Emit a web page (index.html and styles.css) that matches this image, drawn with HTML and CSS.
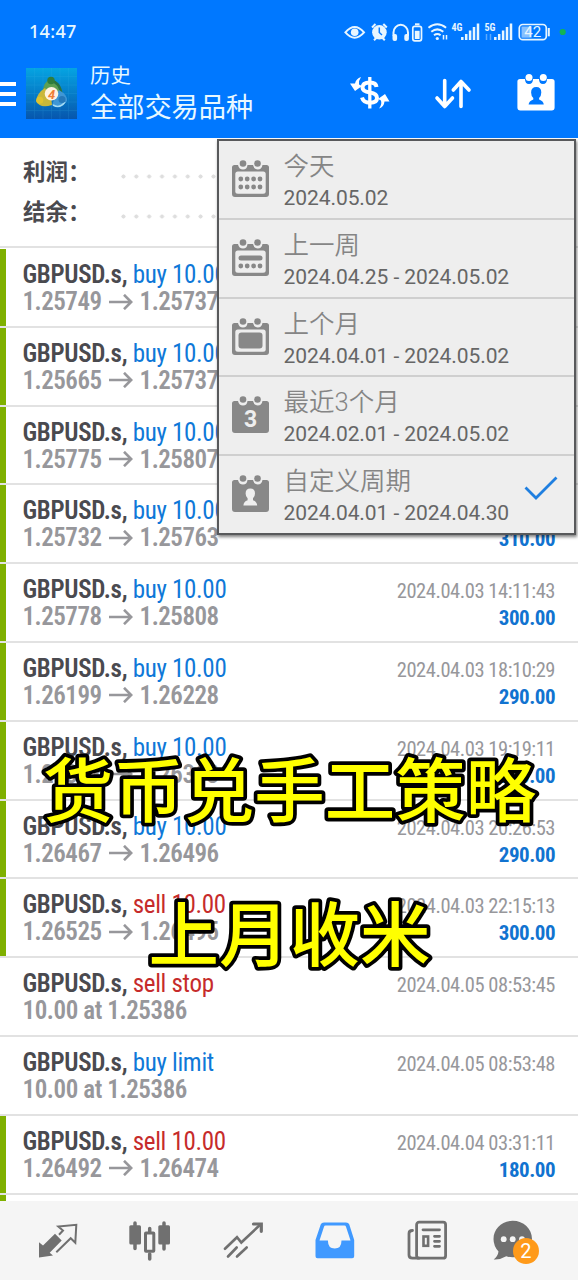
FILE: index.html
```html
<!DOCTYPE html>
<html lang="zh-CN">
<head>
  <meta charset="UTF-8">
  <meta name="viewport" content="width=device-width, initial-scale=1.0">
  <title>历史</title>
  <link rel="stylesheet" href="styles.css">
</head>
<body>
  <header class="header">
    <div class="status-bar">
      <span class="clock">14:47</span>
      <svg class="status-icons" viewBox="0 0 226 28" width="226" height="28" fill="none" stroke="#e8f6ff" stroke-width="2">
        <path d="M3.4 14.3Q12.7 3.5 22 14.3Q12.7 25 3.4 14.3z"/>
        <circle cx="12.7" cy="14.3" r="3.8" fill="#e8f6ff" stroke="none"/>
        <circle cx="37.4" cy="14.3" r="7.3" fill="#e8f6ff" stroke="none"/>
        <path d="M30 9.5l3.5-3.5M44.8 9.5l-3.5-3.5M32 22.2l2.5-2.5M42.8 22.2l-2.5-2.5"/>
        <path d="M37.3 9.5v5l2.7 2.5" stroke="#0a7bff" stroke-width="1.5"/>
        <path d="M51.5 18v-3.5a7.2 7.6 0 0 1 14.5 0V18"/>
        <rect x="50.5" y="16" width="4.6" height="7" rx="2" fill="#e8f6ff" stroke="none"/>
        <rect x="62.3" y="16" width="4.6" height="7" rx="2" fill="#e8f6ff" stroke="none"/>
        <rect x="70.8" y="8.3" width="8.7" height="14.5" rx="2" stroke-width="1.7"/>
        <path d="M73 6.3h4.5"/>
        <rect x="72.8" y="12.8" width="4.8" height="8.2" fill="#e8f6ff" stroke="none"/>
        <path d="M86.5 9.7q8.8-7 17.6 0M89.3 13.7q6-4.7 12 0M92 17.3q3.3-2.5 6.6 0"/>
        <circle cx="95.3" cy="20.5" r="1.6" fill="#e8f6ff" stroke="none"/>
        <path d="M101.5 17v4.5M104.5 17v4.5" stroke-width="1.5"/>
        <path d="M120.3 19v3M124.2 16v6M128.1 12.5v9.5M132 9v13M136 5.5v16.5" stroke-width="2.5"/>
        <path d="M153.3 19v3M157.2 16v6M161.1 12.5v9.5M165 9v13M169 5.5v16.5" stroke-width="2.5"/>
        <path d="M144.5 16v6M148.5 16v6" stroke-width="1.5" opacity=".4"/>
        <rect x="177.3" y="6.5" width="27" height="15.2" rx="3.5" stroke-width="1.7"/>
        <rect x="179.5" y="8.5" width="10" height="11.2" fill="#86c0ff" stroke="none"/>
        <path d="M206.8 10v8.3"/>
        <circle cx="220.7" cy="14" r="3.1" fill="#12b455" stroke="none"/>
        <g fill="#e8f6ff" stroke="none">
          <text class="net" x="109.5" y="13">4G</text>
          <text class="net" x="142.5" y="13">5G</text>
          <text class="level" x="190.8" y="19.3" text-anchor="middle">42</text>
        </g>
      </svg>
    </div>
    <div class="toolbar">
      <div class="burger"><i></i><i></i><i></i></div>
      <svg class="app-icon" viewBox="0 0 51 51" width="51" height="51">
        <defs>
          <linearGradient id="sea" x1="0" y1="0" x2="0" y2="1">
            <stop offset="0" stop-color="#05a4e2"/>
            <stop offset="1" stop-color="#0756ad"/>
          </linearGradient>
        </defs>
        <rect width="51" height="51" fill="url(#sea)"/>
        <path d="M8.5 0v51M17 0v51M25.5 0v51M34 0v51M42.5 0v51M0 8.5h51M0 17h51M0 25.5h51M0 34h51M0 42.5h51" stroke="#3fb4ea" stroke-width=".6" opacity=".25"/>
        <path d="M17 26Q16 14 25 11Q35 14 37 28l-6 2-9-1z" fill="#5d9f52"/>
        <path d="M25 13q9 1 10.5 14" stroke="#2a7340" stroke-width="2.5" fill="none"/>
        <path d="M19 20q-8 5-9 13q4 8 16 4l-1-8z" fill="#c9b73a"/>
        <path d="M33 22q9 5 8 11q-6 8-15 4l3-8z" fill="#3f97d6"/>
        <path d="M27 37q7 4 12-3" stroke="#a5dcf5" stroke-width="1.5" fill="none"/>
        <circle cx="25" cy="12.5" r="3.7" fill="#2f7d3c"/>
        <circle cx="13.8" cy="32.3" r="3.5" fill="#dfc22f"/>
        <circle cx="36" cy="31.5" r="3.5" fill="#2678b9"/>
        <circle cx="25.5" cy="25.8" r="6.8" fill="#fff2df"/>
        <text class="app-num" x="25.5" y="30.5" text-anchor="middle">4</text>
      </svg>
      <div class="titles">
        <div class="title-small">历史</div>
        <div class="title-main">全部交易品种</div>
      </div>
      <div class="actions">
        <svg viewBox="0 0 44 44" width="44" height="44" fill="none" stroke="#fff">
          <path d="M28.5 17Q28 12.5 22 12.5Q14.5 12.5 14.5 17.5Q14.5 21.5 22 22.5Q29 23.5 29 28Q29 32.8 22 32.8Q15.5 32.8 14 27.5" stroke-width="4"/>
          <path d="M21.8 7v31.5" stroke-width="3.3"/>
          <path d="M13 7Q8 8.500 7 13.5L2 13.5l5 7.500L14 16l-3-1.500Q10.500 10.5 13 7zM31 38.500q5-1.500 5.500-7l5 0-4.500-7.500-7 5 3 1.500Q34 34.5 31 38.500z" fill="#fff" stroke="none"/>
        </svg>
        <svg viewBox="0 0 44 44" width="44" height="44" fill="none" stroke="#fff" stroke-width="3.6" stroke-linecap="round" stroke-linejoin="round">
          <path d="M13.7 10.5v26M6 28l7.7 8.5L21.5 28M30 36.5V11.5M22.3 20L30 11.5 38 20"/>
        </svg>
        <svg viewBox="0 0 44 44" width="44" height="44">
          <path d="M6 9h5q0 5 4 5t4-5h6q0 5 4 5t4-5h5q2.600 0 2.600 2.500v26q0 3-3 3H6.400q-3 0-3-3v-26Q3.400 9 6 9z" fill="#fff"/>
          <circle cx="15" cy="7.5" r="3.5" fill="#fff"/>
          <circle cx="29.3" cy="7.5" r="3.5" fill="#fff"/>
          <path d="M22.3 17q5 0 5 5.500 0 3.500-2.200 5.500v1.500q4.400 1.500 4.700 5H14.600q.3-3.500 4.700-5V28q-2.200-2-2.200-5.500 0-5.500 5.200-5.500z" fill="#0078ff"/>
        </svg>
      </div>
    </div>
  </header>

  <section class="summary">
    <div class="summary-row"><b>利润：</b><span class="dots"></span></div>
    <div class="summary-row"><b>结余：</b><span class="dots"></span></div>
  </section>

  <main class="deals" id="deals"></main>

  <nav class="tabs">
    <svg viewBox="0 0 44 44" width="44" height="44" fill="none" stroke="#707070" stroke-width="2">
      <path d="M3 38.5V23.2l4 3.3L19 14.8l6.7 6.7-12 12.3 3.3 2.7z" fill="#707070" stroke="none"/>
      <path d="M20.3 33.2L34.7 19.2l4.6 4.6 1-18-18 1.700 4.700 4-4 4.300"/>
    </svg>
    <svg viewBox="0 0 44 44" width="44" height="44" fill="none" stroke="#707070" stroke-width="3.5" stroke-linecap="round">
      <path d="M7 4v25.5M36 4v26M21.7 9.5V13M21.7 35v5"/>
      <rect x="1.3" y="6.2" width="11.7" height="19.3" rx="1.5" fill="#707070" stroke="none"/>
      <rect x="30.3" y="6.2" width="11.7" height="19.3" rx="1.5" fill="#707070" stroke="none"/>
      <rect x="17.5" y="14" width="8.3" height="18.3" rx=".5" stroke-width="3" fill="#f5f5f5"/>
    </svg>
    <svg viewBox="0 0 44 44" width="44" height="44" fill="none" stroke="#707070" stroke-width="2.6" stroke-linecap="round">
      <path d="M4 29.8L16 18.2l4.3 5.3L39.7 5.3"/>
      <path d="M32.5 5H40.3v7.3" stroke-width="3.2"/>
      <path d="M7 37.5l8.7-9M16 37.5l9.7-9"/>
    </svg>
    <svg viewBox="0 0 44 44" width="44" height="44">
      <path fill="#4099ff" fill-rule="evenodd" d="M11 3.5H33q2.500 0 3.300 2l4.900 15.5v16.2q0 2-2 2H4.500q-2 0-2-2V21L7.700 5.500q.8-2 3.300-2zM12.500 6.500Q11.300 6.500 11 7.800L6.500 21.5h8.400q0 8 6.800 8t6.800-8h9L33 7.800q-.4-1.300-1.500-1.300z"/>
    </svg>
    <svg viewBox="0 0 44 44" width="44" height="44" fill="none" stroke="#707070" stroke-width="2.8" stroke-linecap="round">
      <rect x="11.6" y="3.2" width="29" height="36" rx="2.5"/>
      <path d="M7.5 11.5Q4 11.5 4 14.5V36q0 3.2 3.5 3.2H14M18 10.8h16.5M29.5 17.3h5M29.5 22.3h5M29.5 27.3h5"/>
      <rect x="18.5" y="17.5" width="4.6" height="9.3" stroke-width="2.6"/>
    </svg>
    <div class="chat">
      <svg viewBox="0 0 44 44" width="44" height="44">
        <path fill="#707070" d="M14.7 1.8c10.800 0 19.300 8 19.300 18.200s-8.500 18.300-19.300 18.300q-4 0-6.500-1Q2 41-4.300 40.500 0 37 .5 32.500Q-4.500 27-4.500 20C-4.500 9.800 4 1.800 14.700 1.800z"/>
        <circle cx="5.7" cy="20.2" r="2.9" fill="#f5f5f5"/>
        <circle cx="14.7" cy="20.2" r="2.9" fill="#f5f5f5"/>
        <circle cx="24" cy="20.2" r="2.9" fill="#f5f5f5"/>
      </svg>
      <span class="badge">2</span>
    </div>
  </nav>

  <div class="period-menu" id="periodMenu"></div>

  <svg class="caption" viewBox="0 0 578 280" width="578" height="280">
    <text x="289.5" y="97" text-anchor="middle">货币兑手工策略</text>
    <text x="289.5" y="240.5" text-anchor="middle">上月收米</text>
  </svg>

  <script>
    const deals = [
      { side: 'buy', volume: '10.00', from: '1.25749', to: '1.25737' },
      { side: 'buy', volume: '10.00', from: '1.25665', to: '1.25737' },
      { side: 'buy', volume: '10.00', from: '1.25775', to: '1.25807' },
      { side: 'buy', volume: '10.00', from: '1.25732', to: '1.25763', profit: '310.00' },
      { side: 'buy', volume: '10.00', from: '1.25778', to: '1.25808', time: '2024.04.03 14:11:43', profit: '300.00' },
      { side: 'buy', volume: '10.00', from: '1.26199', to: '1.26228', time: '2024.04.03 18:10:29', profit: '290.00' },
      { side: 'buy', volume: '10.00', from: '1.26333', to: '1.26363', time: '2024.04.03 19:19:11', profit: '300.00' },
      { side: 'buy', volume: '10.00', from: '1.26467', to: '1.26496', time: '2024.04.03 20:26:53', profit: '290.00' },
      { side: 'sell', volume: '10.00', from: '1.26525', to: '1.26495', time: '2024.04.03 22:15:13', profit: '300.00' },
      { side: 'sell', volume: 'stop', order: '10.00 at 1.25386', time: '2024.04.05 08:53:45' },
      { side: 'buy', volume: 'limit', order: '10.00 at 1.25386', time: '2024.04.05 08:53:48' },
      { side: 'sell', volume: '10.00', from: '1.26492', to: '1.26474', time: '2024.04.04 03:31:11', profit: '180.00' }
    ];

    const arrow = '<svg class="arrow" viewBox="0 0 24 16" width="24" height="16" fill="none" stroke="#97979b" stroke-width="2.6"><path d="M0 8h22.5M15 .8l7.2 7.2-7.2 7.2"/></svg>';

    document.getElementById('deals').innerHTML = deals.map(d => `
      <div class="deal ${d.order ? '' : 'closed'}">
        <div class="deal-info">
          <div class="deal-name"><b>GBPUSD.s,</b> <span class="${d.side}">${d.side} ${d.volume}</span></div>
          <div class="deal-price">${d.order ? `<span class="order">${d.order}</span>` : `<span>${d.from}</span>${arrow}<span>${d.to}</span>`}</div>
        </div>
        <div class="deal-result">
          <div class="deal-time">${d.time || ''}</div>
          <div class="deal-profit">${d.profit || ''}</div>
        </div>
      </div>`).join('') + '<div class="deal closed"></div>';

    // calendar drawings share a body, the inside differs per period
    const frame = '<rect x="3.3" y="11.5" width="30.4" height="22.3" rx="2.5" fill="#eee"/>';
    const dot = (x, y) => `<circle cx="${x}" cy="${y}" r="2.4"/>`;
    const dotRow = y => [8.8, 15.2, 21.6, 28].map(x => dot(x, y)).join('');
    const periods = [
      { name: '今天', range: '2024.05.02', icon: frame + dotRow(19) + dotRow(27) },
      { name: '上一周', range: '2024.04.25 - 2024.05.02', icon: frame + '<rect x="6.5" y="16.5" width="24" height="5" rx="2.5"/>' + dotRow(27) },
      { name: '上个月', range: '2024.04.01 - 2024.05.02', icon: frame + '<rect x="6.5" y="14.5" width="24" height="16" rx="3"/>' },
      { name: '最近3个月', range: '2024.02.01 - 2024.05.02', icon: '<text class="cal-num" x="18.5" y="30.5" text-anchor="middle">3</text>' },
      { name: '自定义周期', range: '2024.04.01 - 2024.04.30', checked: true, icon: '<path fill="#eee" d="M18.3 13.5q4.7 0 4.7 5 0 3-2 4.8v2q4 1.4 4.2 5.2H11.400q.2-3.800 4.200-5.200v-2q-2-1.800-2-4.800 0-5 4.700-5z"/>' }
    ];

    document.getElementById('periodMenu').innerHTML = periods.map(p => `
      <div class="period">
        <svg class="cal" viewBox="0 0 37 37" width="37" height="37" fill="#888">
          <path d="M2.5 5H6q1 4.5 5 4.5T15.5 5h5.500q1 4.500 4.800 4.500T30.500 5h4Q37 5 37 7.500V34q0 3-3 3H3q-3 0-3-3V7.500Q0 5 2.500 5z"/>
          <circle cx="11" cy="3.5" r="3.3"/><circle cx="25.5" cy="3.5" r="3.3"/>
          ${p.icon}
        </svg>
        <div class="period-text">
          <div class="period-name">${p.name}</div>
          <div class="period-range">${p.range}</div>
        </div>
        ${p.checked ? '<svg class="check" viewBox="0 0 34 24" width="34" height="24" fill="none" stroke="#1f7fe0" stroke-width="2.8"><path d="M1.5 11.5l10.5 10.5L32.5 1.5"/></svg>' : ''}
      </div>`).join('');
  </script>
</body>
</html>
```
FILE: styles.css
```css
* {
  box-sizing: border-box;
}
body {
  margin: 0;
  height: 1280px;
  position: relative;
  overflow: hidden;
  display: flex;
  flex-direction: column;
  background-color: #fff;
  font-family: Roboto, "Noto Sans CJK SC", sans-serif;
}
svg {
  display: block;
  flex: none;
}
.header {
  height: 138px;
  flex: none;
  background-color: #0078ff;
  color: #e8f8ff;
}
.status-bar {
  display: flex;
  align-items: center;
  justify-content: space-between;
  height: 64px;
  padding: 0 10px 0 29px;
}
.clock {
  padding-bottom: 2px;
  font-family: "Noto Sans", sans-serif;
  font-size: 18px;
  font-weight: 500;
  letter-spacing: 0.3px;
}
.net {
  font: bold 10px Roboto, sans-serif;
  font-stretch: condensed;
}
.level {
  font: 400 15px Roboto, sans-serif;
}
.toolbar {
  display: flex;
  height: 58px;
  align-items: center;
}
.burger {
  width: 26px;
  padding-top: 2px;
  display: flex;
  flex-direction: column;
  gap: 6px;
}
.burger i {
  width: 16px;
  height: 4px;
  background-color: #fff;
}
.app-num {
  font: italic bold 13px Roboto, sans-serif;
  fill: #ee7d36;
}
.titles {
  margin-left: 13px;
  padding-top: 5px;
}
.title-small {
  font-size: 20.5px;
  line-height: 26px;
}
.title-main {
  font-size: 27.2px;
  line-height: 39px;
}
.actions {
  display: flex;
  gap: 39px;
  margin-left: auto;
  padding: 0 20px 2px 0;
}
.summary {
  height: 110px;
  flex: none;
  padding: 12px 0 0 23px;
  border-bottom: 2px solid #e2e2e2;
}
.summary-row {
  display: flex;
  height: 40px;
  align-items: center;
  font-size: 22.5px;
  color: #4a4a4f;
}
.summary-row b {
  width: 93.5px;
}
.dots {
  flex: 1;
  height: 5px;
  margin: 13px 20px 0 0;
  background: radial-gradient(circle at 50% 50%, #dedede 1.8px, transparent 2.3px) 0 0 / 12.87px 5px;
}
.deals {
  flex: 1;
  padding-top: 1px;
  overflow: hidden;
}
.deal {
  display: flex;
  justify-content: space-between;
  height: 78.8px;
  padding: 11px 23px 0 22.5px;
  border-bottom: 2px solid #e2e2e2;
  font-stretch: condensed;
  white-space: nowrap;
}
.closed {
  background: linear-gradient(#7fb000, #7fb000) 0 0 / 6px 100% no-repeat;
}
.deal-name {
  font-size: 25px;
  line-height: 29px;
  letter-spacing: -0.3px;
  color: #4a4a4f;
}
.deal-name b {
  font-weight: 600;
}
.buy {
  color: #0f78d8;
}
.sell {
  color: #c62b2b;
}
.deal-price {
  display: flex;
  align-items: center;
  gap: 7px;
  font-size: 25px;
  line-height: 25px;
  font-weight: 600;
  letter-spacing: -0.5px;
  color: #97979b;
}
.order {
  letter-spacing: -0.4px;
}
.deal-result {
  text-align: right;
}
.deal-time {
  height: 30px;
  padding-top: 2px;
  font-size: 20.5px;
  line-height: 28px;
  letter-spacing: -0.45px;
  color: #97979b;
}
.deal-profit {
  font-size: 21px;
  line-height: 26px;
  font-weight: 700;
  letter-spacing: -0.5px;
  color: #1173d0;
}
.tabs {
  display: flex;
  justify-content: space-around;
  align-items: center;
  height: 79px;
  flex: none;
  padding: 0 12px;
  background-color: #f5f5f5;
}
.tabs svg {
  overflow: visible;
}
.chat {
  position: relative;
}
.badge {
  position: absolute;
  left: 15px;
  top: 19px;
  width: 26px;
  height: 26px;
  border-radius: 50%;
  background-color: #ff9a1a;
  color: #fff;
  font-size: 20px;
  line-height: 27px;
  text-align: center;
}
.period-menu {
  position: absolute;
  left: 217px;
  top: 139px;
  width: 359px;
  border: 2px solid #58595b;
  background-color: #eee;
  box-shadow: 1px 2px 3px rgba(0, 0, 0, 0.5);
}
.period {
  display: flex;
  height: 78.8px;
  padding: 0 16px 0 13px;
  border-bottom: 2px solid #cfcfcf;
}
.period:last-child {
  height: 77px;
  border-bottom: none;
}
.cal {
  margin-top: 19px;
}
.cal-num {
  font: bold 23px Roboto, sans-serif;
  fill: #eee;
}
.period-text {
  margin-left: 14.5px;
  padding-top: 8px;
}
.period-name {
  font-size: 25.5px;
  line-height: 35px;
  font-weight: 350;
  color: #858585;
}
.period-range {
  font-size: 21px;
  line-height: 29px;
  letter-spacing: -0.07px;
  color: #666;
}
.check {
  margin: 20px 0 0 auto;
}
.caption {
  position: absolute;
  left: 0;
  top: 720px;
  font-family: "Noto Sans CJK SC", sans-serif;
  font-size: 70.5px;
  font-weight: 500;
  fill: #ff0;
  stroke: #000;
  stroke-width: 7.5px;
  stroke-linejoin: round;
  paint-order: stroke fill;
}
```
